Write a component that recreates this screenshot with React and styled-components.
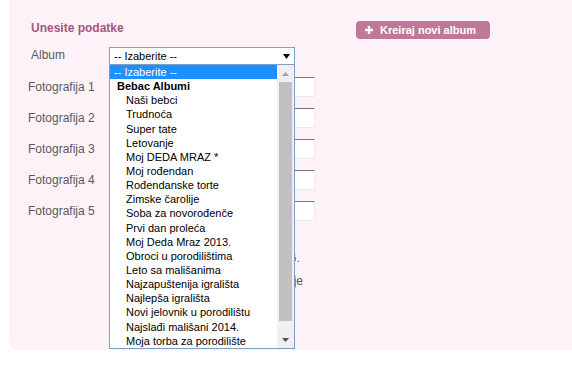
import React from "react";
import styled, { createGlobalStyle } from "styled-components";

const GlobalStyle = createGlobalStyle`
  html, body { margin: 0; padding: 0; background: #ffffff; }
  body { font-family: "Liberation Sans", Arial, sans-serif; }
  * { box-sizing: border-box; }
`;

const Panel = styled.section`
  margin-left: 9px;
  height: 350px;
  background: #fef2f9;
  border-bottom-left-radius: 8px;
  padding: 21px 0 0 19px;
`;

const Header = styled.header`
  display: grid;
  grid-template-columns: 325px auto;
  align-items: start;
  padding-left: 3px;
`;

const Title = styled.h2`
  margin: 0;
  font-size: 12px;
  line-height: 14px;
  font-weight: bold;
  color: #a4557f;
`;

const CreateButton = styled.button`
  justify-self: start;
  display: inline-flex;
  align-items: center;
  gap: 7px;
  height: 18px;
  padding: 0 14px 0 9px;
  border: none;
  border-radius: 4px;
  background: #c07898;
  color: #ffffff;
  font-family: "Liberation Sans", Arial, sans-serif;
  font-size: 11px;
  font-weight: bold;
  line-height: 18px;
  cursor: pointer;
`;

const Form = styled.div`
  display: grid;
  grid-template-columns: 81px 206px;
  row-gap: 11px;
  align-items: center;
  margin-top: 8px;
`;

const Label = styled.label`
  font-size: 12px;
  line-height: 14px;
  color: #5a5a5a;
  padding-left: ${(p) => p.$indent || 0}px;
  align-self: ${(p) => (p.$top ? "start" : "center")};
  margin-top: ${(p) => (p.$top ? 1 : 0)}px;
`;

const SelectWrap = styled.div`
  position: relative;
  width: 186px;
  height: 18px;
  margin-bottom: 1px;
`;

const SelectBox = styled.div`
  display: flex;
  align-items: center;
  justify-content: space-between;
  height: 18px;
  padding: 0 4px;
  border: 1px solid #7ea0dc;
  background: #ffffff;
  font-size: 11px;
  color: #000000;
`;

const Dropdown = styled.div`
  position: absolute;
  top: 17px;
  left: 0;
  z-index: 10;
  display: flex;
  width: 186px;
  height: 285px;
  border: 1px solid #7f9dc9;
  background: #ffffff;
`;

const OptionList = styled.ul`
  flex: 1;
  margin: 0;
  padding: 0;
  list-style: none;
  overflow: hidden;
`;

const Option = styled.li`
  height: 14.15px;
  line-height: 14.15px;
  font-size: 11px;
  white-space: nowrap;
  padding-left: ${(p) => (p.$kind === "group" ? 7 : p.$kind === "child" ? 16 : 4)}px;
  font-weight: ${(p) => (p.$kind === "group" ? "bold" : "normal")};
  background: ${(p) => (p.$active ? "#1e90ff" : "transparent")};
  color: ${(p) => (p.$active ? "#ffffff" : "#000000")};
`;

const Scrollbar = styled.div`
  display: flex;
  flex-direction: column;
  width: 17px;
  background: #f0f0f0;
`;

const ScrollButton = styled.div`
  display: flex;
  align-items: center;
  justify-content: center;
  height: 17px;
  flex: none;
`;

const Thumb = styled.div`
  height: 239px;
  margin: 0 2px;
  background: #c1c1c1;
  flex: none;
`;

const Track = styled.div`
  flex: 1;
`;

const TextInput = styled.div`
  width: 206px;
  height: 20px;
  background: #ffffff;
  border-top: 1px solid #767676;
  border-left: 1px solid #767676;
  border-right: 1px solid #ebebeb;
  border-bottom: 1px solid #ebebeb;
`;

const Hints = styled.div`
  grid-column: 2;
  margin-top: 19px;
  display: flex;
  flex-direction: column;
  gap: 9px;
`;

const Hint = styled.p`
  margin: 0;
  width: ${(p) => p.$width}px;
  font-size: 12px;
  line-height: 14px;
  color: #555555;
  text-align: right;
  white-space: nowrap;
`;

const Triangle = ({ dir, color, w, h }) => (
  <svg width={w} height={h} viewBox={`0 0 ${w} ${h}`}>
    {dir === "down" ? (
      <polygon points={`0,0 ${w},0 ${w / 2},${h}`} fill={color} />
    ) : (
      <polygon points={`0,${h} ${w},${h} ${w / 2},0`} fill={color} />
    )}
  </svg>
);

const PlusIcon = () => (
  <svg width="8" height="8" viewBox="0 0 8 8">
    <rect x="2.8" y="0" width="2.4" height="8" fill="#ffffff" />
    <rect x="0" y="2.8" width="8" height="2.4" fill="#ffffff" />
  </svg>
);

const options = [
  { label: "-- Izaberite --", kind: "top", active: true },
  { label: "Bebac Albumi", kind: "group" },
  { label: "Naši bebci", kind: "child" },
  { label: "Trudnoća", kind: "child" },
  { label: "Super tate", kind: "child" },
  { label: "Letovanje", kind: "child" },
  { label: "Moj DEDA MRAZ *", kind: "child" },
  { label: "Moj rođendan", kind: "child" },
  { label: "Rođendanske torte", kind: "child" },
  { label: "Zimske čarolije", kind: "child" },
  { label: "Soba za novorođenče", kind: "child" },
  { label: "Prvi dan proleća", kind: "child" },
  { label: "Moj Deda Mraz 2013.", kind: "child" },
  { label: "Obroci u porodilištima", kind: "child" },
  { label: "Leto sa mališanima", kind: "child" },
  { label: "Najzapuštenija igrališta", kind: "child" },
  { label: "Najlepša igrališta", kind: "child" },
  { label: "Novi jelovnik u porodilištu", kind: "child" },
  { label: "Najslađi mališani 2014.", kind: "child" },
  { label: "Moja torba za porodilište", kind: "child" },
];

const photos = [1, 2, 3, 4, 5];

export default function App() {
  return (
    <>
      <GlobalStyle />
      <Panel>
        <Header>
          <Title>Unesite podatke</Title>
          <CreateButton>
            <PlusIcon />
            Kreiraj novi album
          </CreateButton>
        </Header>
        <Form>
          <Label $indent={3} $top>
            Album
          </Label>
          <SelectWrap>
            <SelectBox>
              <span>-- Izaberite --</span>
              <Triangle dir="down" color="#000000" w={7} h={5} />
            </SelectBox>
            <Dropdown>
              <OptionList>
                {options.map((o) => (
                  <Option key={o.label} $kind={o.kind} $active={o.active}>
                    {o.label}
                  </Option>
                ))}
              </OptionList>
              <Scrollbar>
                <ScrollButton>
                  <Triangle dir="up" color="#a3a3a3" w={7} h={4} />
                </ScrollButton>
                <Thumb />
                <Track />
                <ScrollButton>
                  <Triangle dir="down" color="#505050" w={7} h={4} />
                </ScrollButton>
              </Scrollbar>
            </Dropdown>
          </SelectWrap>
          {photos.map((n) => (
            <React.Fragment key={n}>
              <Label>Fotografija {n}</Label>
              <TextInput />
            </React.Fragment>
          ))}
          <Hints>
            <Hint $width={191}>Dozvoljeni format je JPG.</Hint>
            <Hint $width={194}>Izaberite fotografije</Hint>
          </Hints>
        </Form>
      </Panel>
    </>
  );
}
